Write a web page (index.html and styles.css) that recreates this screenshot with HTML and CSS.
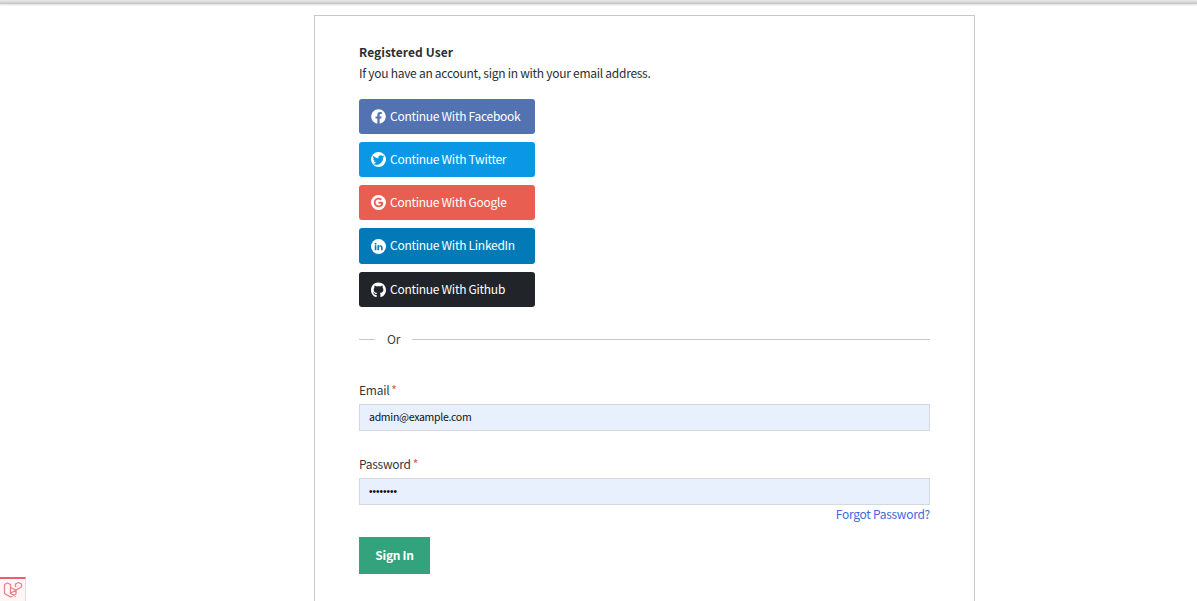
FILE: index.html
```html
<!DOCTYPE html>
<html lang="en">
<head>
<meta charset="utf-8">
<title>Sign In</title>
<link rel="stylesheet" href="styles.css">
</head>
<body>
<div class="topbar"></div>
<main class="card">
  <h1 class="title">Registered User</h1>
  <p class="lead">If you have an account, sign in with your email address.</p>
  <div class="socials">
    <a class="social facebook" href="#">
      <svg class="icon" viewBox="0 0 512 512"><path fill="#fff" d="M504 256C504 119 393 8 256 8S8 119 8 256c0 123.78 90.69 226.38 209.25 245V327.69h-63V256h63v-54.64c0-62.15 37-96.48 93.67-96.48 27.14 0 55.52 4.84 55.52 4.84v61h-31.28c-30.8 0-40.41 19.12-40.41 38.73V256h68.78l-11 71.69h-57.78V501C413.31 482.38 504 379.78 504 256z"/></svg>
      <span class="social-text">Continue With Facebook</span>
    </a>
    <a class="social twitter" href="#">
      <svg class="icon" viewBox="0 0 24 24"><circle cx="12" cy="12" r="12" fill="#fff"/><path fill="#0a98e6" transform="translate(2.600 3.400) scale(.78)" d="M23.953 4.57a10 10 0 01-2.825.775 4.958 4.958 0 002.163-2.723c-.951.555-2.005.959-3.127 1.184a4.92 4.92 0 00-8.384 4.482C7.69 8.095 4.067 6.13 1.64 3.162a4.822 4.822 0 00-.666 2.475c0 1.71.87 3.213 2.188 4.096a4.904 4.904 0 01-2.228-.616v.06a4.923 4.923 0 003.946 4.827 4.996 4.996 0 01-2.212.085 4.936 4.936 0 004.604 3.417 9.867 9.867 0 01-6.102 2.105c-.39 0-.779-.023-1.17-.067a13.995 13.995 0 007.557 2.209c9.053 0 13.998-7.496 13.998-13.985 0-.21 0-.42-.015-.63A9.935 9.935 0 0024 4.59z"/></svg>
      <span class="social-text">Continue With Twitter</span>
    </a>
    <a class="social google" href="#">
      <svg class="icon" viewBox="0 0 24 24"><circle cx="12" cy="12" r="12" fill="#fff"/><path fill="none" stroke="#e85f52" stroke-width="3" d="M19 12.300h-7M18.200 12c0 3.700-2.700 6.200-6.200 6.200a6.200 6.200 0 1 1 4.400-10.600"/></svg>
      <span class="social-text">Continue With Google</span>
    </a>
    <a class="social linkedin" href="#">
      <svg class="icon" viewBox="0 0 24 24"><circle cx="12" cy="12" r="12" fill="#fff"/><path fill="#027ab8" d="M6 10h2.600v8H6zM7.300 6a1.500 1.500 0 1 1 0 3 1.500 1.500 0 0 1 0-3zM10.300 10h2.500v1.100c.5-.8 1.400-1.300 2.600-1.300 2.300 0 3.100 1.500 3.100 3.800V18h-2.600v-3.900c0-1.100-.3-2-1.400-2s-1.600.8-1.600 2V18h-2.600z"/></svg>
      <span class="social-text">Continue With LinkedIn</span>
    </a>
    <a class="social github" href="#">
      <svg class="icon" viewBox="0 0 496 512"><path fill="#fff" d="M165.9 397.4c0 2-2.3 3.6-5.2 3.6-3.3 0-5.6-1.6-5.6-3.6 0-2 2.3-3.6 5.2-3.6 3-.3 5.6 1.3 5.6 3.6zm-31.1-4.5c-.7 2 1.3 4.3 4.3 4.9 2.6 1 5.6 0 6.2-2s-1.3-4.3-4.3-5.2c-2.6-.7-5.5.3-6.2 2.3zm44.2-1.7c-2.9.7-4.9 2.6-4.6 4.9.3 2 2.9 3.3 5.9 2.6 2.9-.7 4.9-2.6 4.6-4.6-.3-1.9-3-3.2-5.9-2.9zM244.8 8C106.1 8 0 113.3 0 252c0 110.9 69.8 205.8 169.5 239.2 12.8 2.3 17.3-5.6 17.3-12.1 0-6.2-.3-40.4-.3-61.4 0 0-70 15-84.7-29.8 0 0-11.4-29.1-27.8-36.6 0 0-22.9-15.7 1.6-15.4 0 0 24.9 2 38.6 25.8 21.9 38.6 58.6 27.5 72.9 20.9 2.3-16 8.8-27.1 16-33.7-55.9-6.2-112.3-14.3-112.3-110.5 0-27.5 7.6-41.3 23.6-58.9-2.6-6.5-11.1-33.3 2.6-67.9 20.9-6.5 69 27 69 27 20-5.6 41.5-8.5 62.8-8.5s42.8 2.9 62.8 8.5c0 0 48.1-33.6 69-27 13.7 34.7 5.2 61.4 2.6 67.9 16 17.7 25.8 31.5 25.8 58.9 0 96.5-58.9 104.2-114.8 110.5 9.2 7.9 17 22.9 17 46.4 0 33.7-.3 75.4-.3 83.6 0 6.5 4.6 14.4 17.3 12.1C428.2 457.8 496 362.9 496 252 496 113.3 383.5 8 244.8 8z"/></svg>
      <span class="social-text">Continue With Github</span>
    </a>
  </div>
  <div class="divider"><span class="divider-text">Or</span></div>
  <form class="form">
    <label class="label" for="email">Email<span class="req">*</span></label>
    <input class="input" id="email" type="text" value="admin@example.com">
    <label class="label label-password" for="password">Password<span class="req">*</span></label>
    <input class="input input-password" id="password" type="password" value="password">
    <div class="forgot-row"><a class="forgot" href="#">Forgot Password?</a></div>
    <button class="submit" type="button">Sign In</button>
  </form>
</main>
<div class="debugbar">
  <svg class="debug-icon" viewBox="0 0 20 20" fill="none" stroke="#e8838a" stroke-width="1.300" stroke-linejoin="round"><path d="M1.500 4.500 4.500 3l3 1.500v9l5.500 3M1.500 4.500v9l6 3.500 5.500-3V10l-5.500 3.200M7.500 7.500l5.500 2.500 5.500-3V4l-3-1.500L12.500 4v3"/></svg>
</div>
</body>
</html>
```
FILE: styles.css
```css
* { box-sizing: border-box; }
html, body { margin: 0; height: 100%; overflow: hidden; background: #fff; }
body {
  font-family: "Noto Sans CJK SC", "Noto Sans", sans-serif;
  font-size: 12px;
  letter-spacing: -.27px;
  color: #2a2e32;
}
.topbar {
  height: 4px;
  background: linear-gradient(#ececec, #c4c4c4);
  box-shadow: 0 1px 2px rgba(0,0,0,.14);
}
.card {
  width: 661px;
  height: 640px;
  margin: 11px 0 0 314px;
  padding: 27px 44px 0;
  border: 1px solid #c8c8c8;
}
.title { margin: 0; font-size: 12px; font-weight: 700; line-height: 18px; letter-spacing: .1px; }
.lead { margin: 3px 0 0; font-size: 12px; line-height: 18px; }
.socials { margin-top: 17px; display: flex; flex-direction: column; gap: 8px; }
.social {
  width: 176px;
  height: 35px;
  display: flex;
  align-items: center;
  gap: 4px;
  padding-left: 12px;
  border-radius: 3px;
  color: #fff;
  text-decoration: none;
  white-space: nowrap;
}
.social-text { margin-bottom: 2px; }
.icon { width: 15px; height: 15px; flex: none; }
.github .icon { height: 16px; }
.facebook { background: #5272b2; }
.twitter { background: #0a98e6; }
.google { background: #e85f52; }
.linkedin { background: #027ab8; height: 36px; }
.linkedin .social-text { margin-bottom: 3px; }
.github { background: #212529; }
.divider {
  margin-top: 23px;
  height: 18px;
  display: flex;
  align-items: center;
}
.divider::before { content: ""; width: 16px; height: 1px; background: #c8c8c8; }
.divider::after { content: ""; flex: 1; height: 1px; background: #c8c8c8; }
.divider-text { padding: 0 12px; color: #3a3f44; line-height: 18px; }
.form { margin-top: 33px; display: flex; flex-direction: column; }
.label { line-height: 18px; color: #33383c; }
.label-password { margin-top: 24px; }
.req { color: #e2574c; margin-left: 2px; }
.input {
  width: 571px;
  height: 27px;
  margin-top: 5px;
  padding: 0 9px 2px;
  border: 1px solid #d6d9dc;
  background: #e8f0fe;
  font: inherit;
  font-size: 10.500px;
  letter-spacing: -.28px;
  color: #111;
  outline: none;
}
.input-password { font-family: "Liberation Sans", sans-serif; font-size: 10px; letter-spacing: 0; padding-bottom: 0; }
.forgot-row { display: flex; justify-content: flex-end; height: 18px; }
.forgot { color: #3f6ad8; line-height: 18px; text-decoration: none; }
.submit {
  width: 71px;
  height: 37px;
  margin-top: 14px;
  padding: 0 0 2px;
  border: 0;
  background: #32a37c;
  color: #fff;
  font: inherit;
  font-weight: 700;
  letter-spacing: -.3px;
}
.debugbar {
  position: fixed;
  left: 0;
  bottom: 0;
  width: 26px;
  height: 24px;
  background: #fff6f6;
  border-top: 2px solid #e8606a;
  border-right: 1px solid #ddd;
  display: flex;
  align-items: center;
  justify-content: center;
}
.debug-icon { width: 20px; height: 20px; }
```
